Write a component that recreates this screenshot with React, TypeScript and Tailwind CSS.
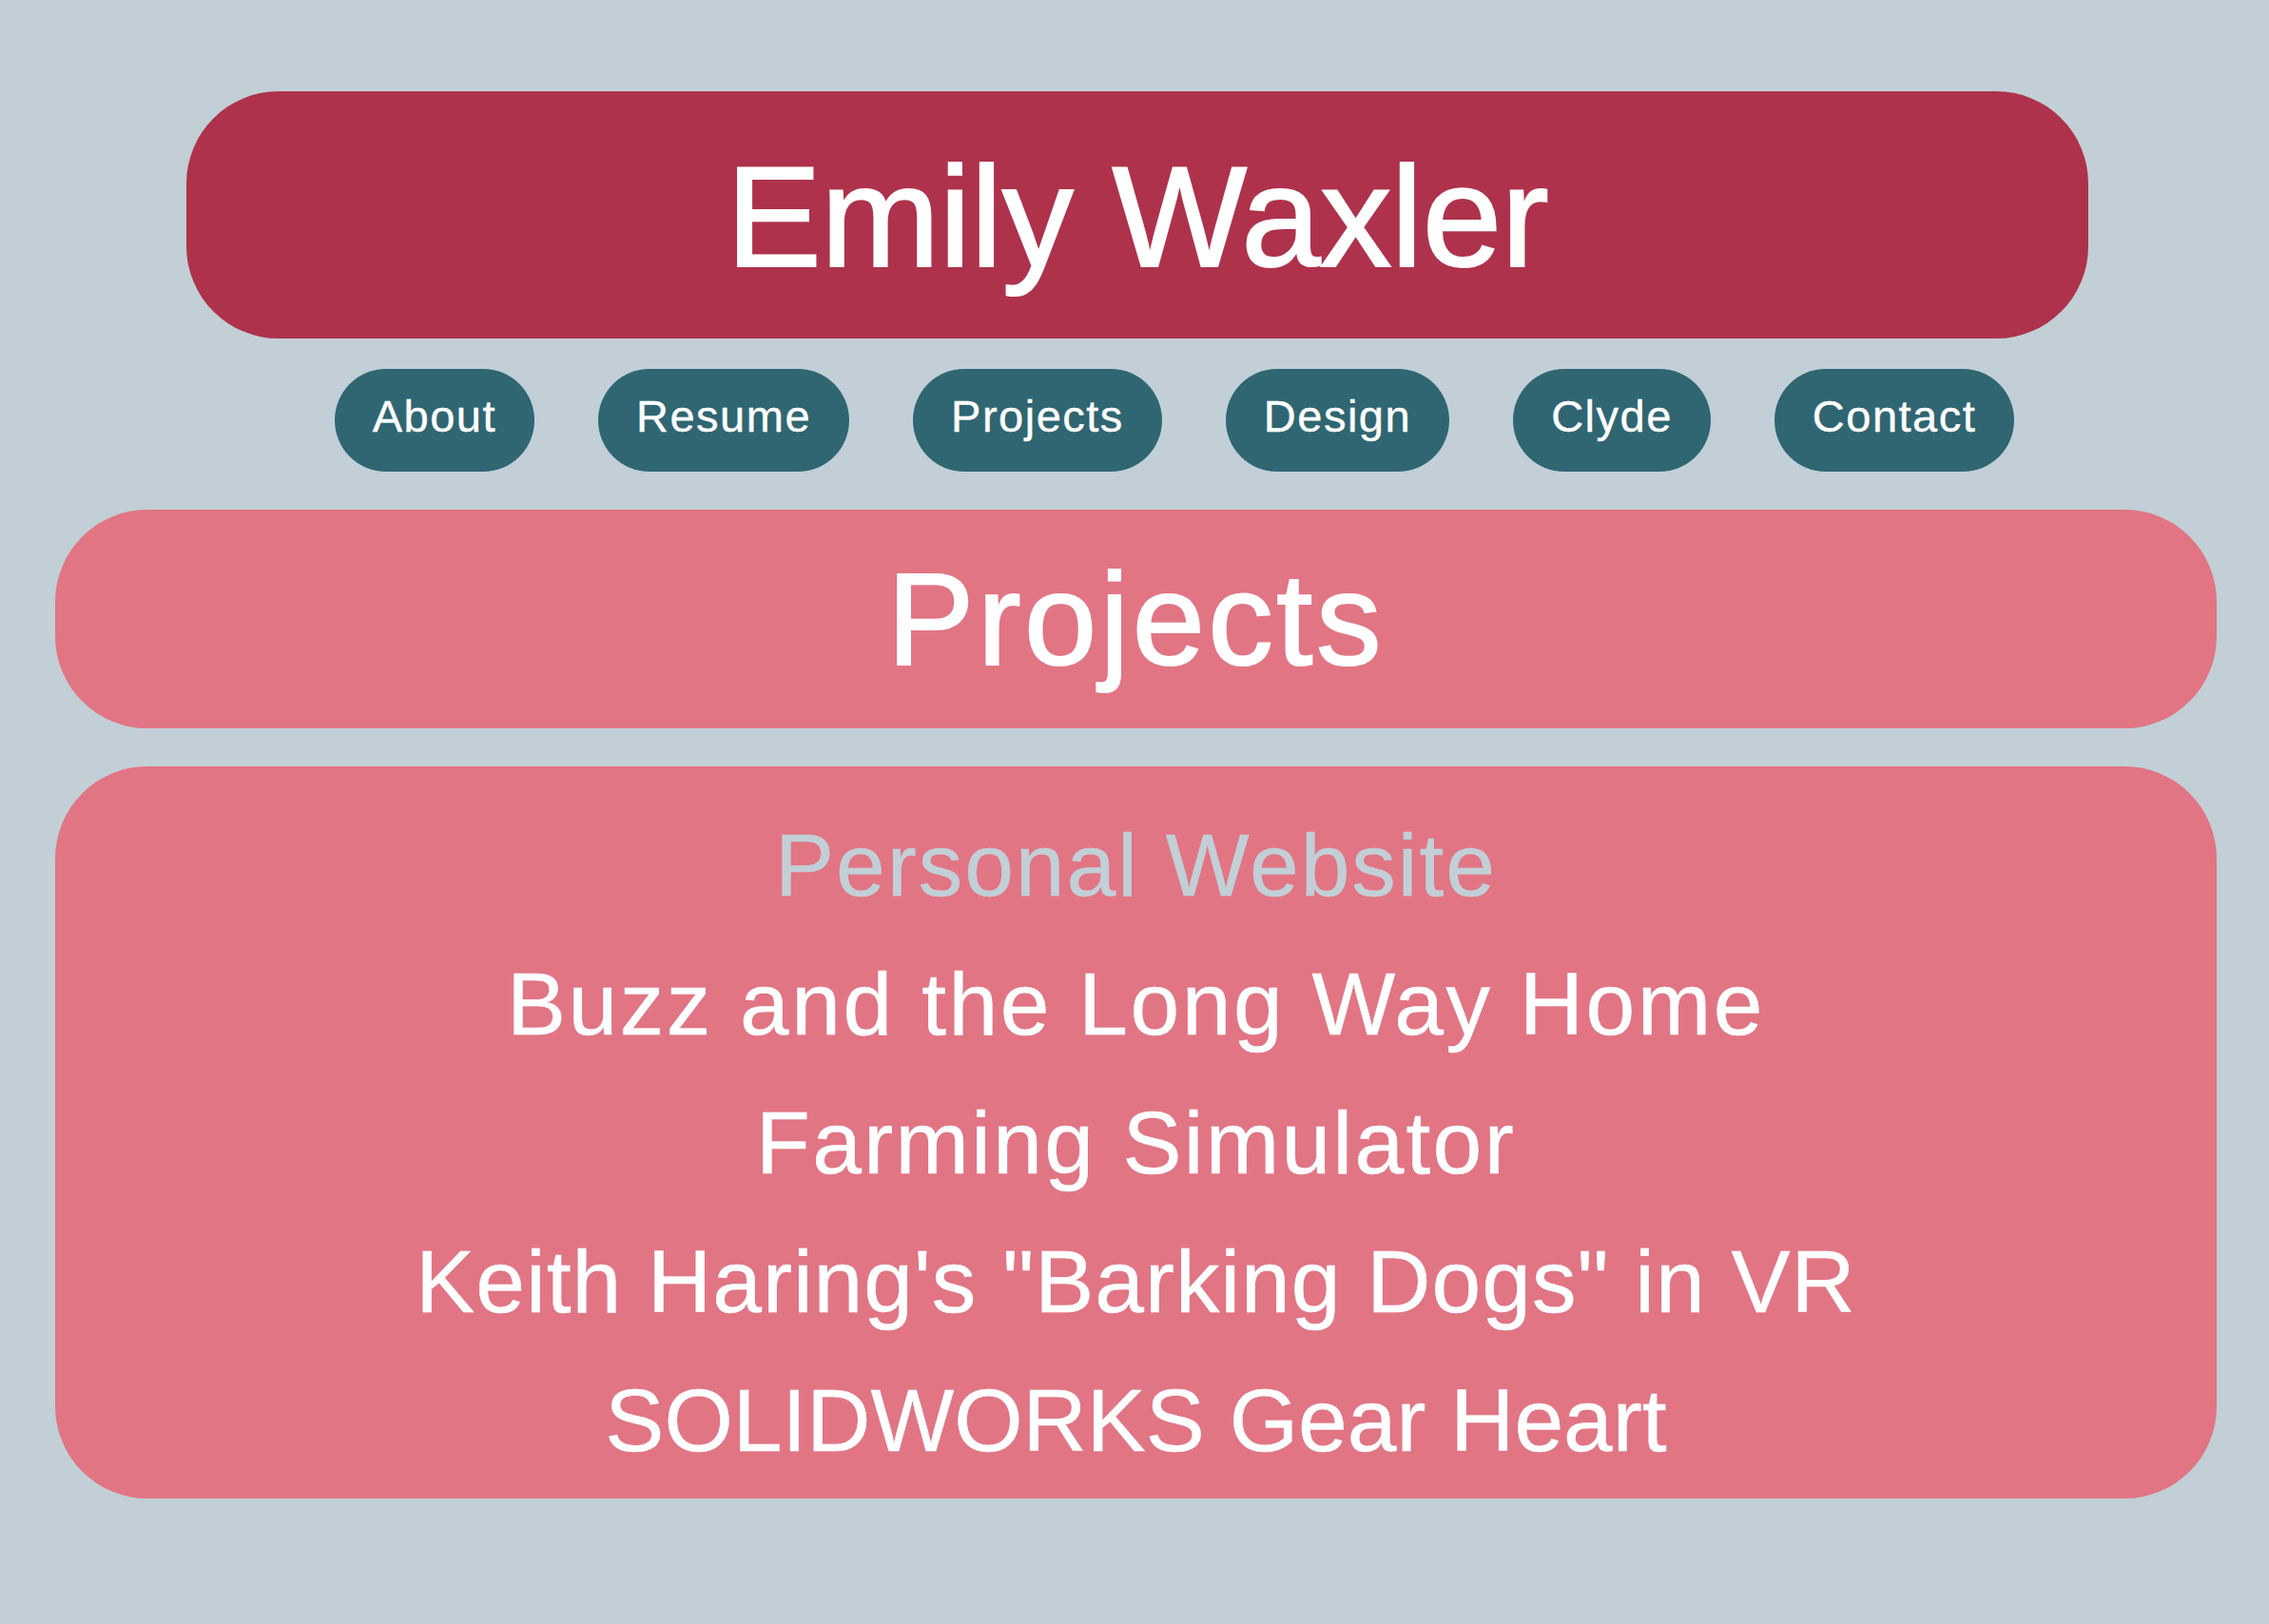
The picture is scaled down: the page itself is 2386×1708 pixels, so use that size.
import React from "react";

const navItems = ["About", "Resume", "Projects", "Design", "Clyde", "Contact"];

const projects = [
  { title: "Personal Website", current: true, tracking: "tracking-[2px]" },
  { title: "Buzz and the Long Way Home", tracking: "tracking-[2.5px]" },
  { title: "Farming Simulator", tracking: "tracking-[2.3px]" },
  { title: 'Keith Haring\'s "Barking Dogs" in VR', tracking: "tracking-[1px]" },
  { title: "SOLIDWORKS Gear Heart", tracking: "tracking-[0px]" },
];

function joinClasses(...parts: string[]) {
  return parts.filter(Boolean).join(" ");
}

export default function App() {
  return (
    <div
      className="min-h-screen w-full bg-[#c2cfd7] pt-[96px] pb-[132px]"
      style={{ fontFamily: '"Liberation Sans", Arial, sans-serif' }}
    >
      {/* Name banner */}
      <div className="pl-[196px] pr-[190px]">
        <header className="flex h-[260px] items-center justify-center rounded-[97px] bg-[#ae324b]">
          <h1 className="pt-[4px] text-[150px] leading-none tracking-[-0.4px] text-white [-webkit-text-stroke:2px_white]">
            Emily Waxler
          </h1>
        </header>
      </div>

      {/* Site navigation */}
      <nav className="mt-[32px] flex justify-center gap-[67px] pl-[84px]">
        {navItems.map((item) => (
          <a
            key={item}
            href="#"
            className="flex h-[108px] items-center rounded-full bg-[#2f6671] px-[40px] pb-[10px] text-[47px] leading-none tracking-[1.5px] text-white [-webkit-text-stroke:0.4px_white]"
          >
            {item}
          </a>
        ))}
      </nav>

      <main className="mt-[40px] flex flex-col gap-[40px] pl-[58px] pr-[55px]">
        {/* Page heading */}
        <section className="flex h-[230px] items-center justify-center rounded-[97px] bg-[#e17584]">
          <h2 className="text-[137px] leading-none tracking-[3.5px] text-white [-webkit-text-stroke:2px_white]">
            Projects
          </h2>
        </section>

        {/* Project list */}
        <section className="h-[770px] rounded-[97px] bg-[#e17584] pt-[31px] pb-[9px]">
          <ul className="flex flex-col items-center">
            {projects.map((p) => (
              <li
                key={p.title}
                className={joinClasses(
                  "text-[93px] leading-[146px]",
                  p.tracking,
                  p.current
                    ? "text-[#c2cfd7] [-webkit-text-stroke:0.5px_#c2cfd7]"
                    : "text-white [-webkit-text-stroke:0.5px_white]"
                )}
              >
                {p.title}
              </li>
            ))}
          </ul>
        </section>
      </main>
    </div>
  );
}
